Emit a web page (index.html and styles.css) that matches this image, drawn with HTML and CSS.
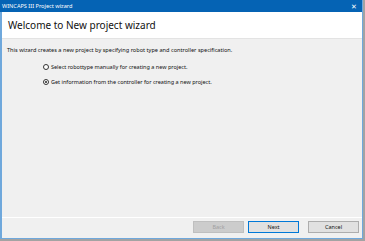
FILE: index.html
```html
<!DOCTYPE html>
<html lang="en">
<head>
  <meta charset="UTF-8" />
  <title>WINCAPS III Project wizard</title>
  <link rel="stylesheet" href="styles.css">
</head>
<body>
  <div class="window">
    <div class="titlebar">
      <span class="title">WINCAPS III Project wizard</span>
      <span class="close">&#x2715;</span>
    </div>
    <div class="header">
      <h1>Welcome to New project wizard</h1>
    </div>
    <div class="content">
      <p class="intro">This wizard creates a new project by specifying robot type and controller specification.</p>
      <div class="options">
        <label class="option">
          <span class="radio"></span>
          Select robottype manually for creating a new project.
        </label>
        <label class="option">
          <span class="radio checked"></span>
          Get information from the controller for creating a new project.
        </label>
      </div>
    </div>
    <div class="footer">
      <button class="btn disabled">Back</button>
      <button class="btn default">Next</button>
      <button class="btn cancel">Cancel</button>
    </div>
  </div>
</body>
</html>
```

FILE: styles.css
```css
* {
  margin: 0;
  padding: 0;
  box-sizing: border-box;
  font-family: "Noto Sans", "Open Sans", sans-serif;
}

body {
  background-color: #a3a3a3;
  width: 365px;
  height: 241px;
  overflow: hidden;
}

.window {
  width: 363px;
  height: 239px;
  display: flex;
  flex-direction: column;
  background-color: #f0f0f0;
  border-left: 2px solid #6fa8dc;
  border-right: 1px solid #6fa8dc;
  border-bottom: 1px solid #6fa8dc;
}

.titlebar {
  height: 12px;
  background-color: #0563b4;
  color: #fff;
  display: flex;
  align-items: center;
  justify-content: space-between;
  padding: 0 5px 0 0;
  margin-left: -2px;
}

.titlebar .title {
  font-size: 5.6px;
  padding-left: 2px;
}

.titlebar .close {
  font-size: 7px;
  line-height: 1;
}

.header {
  height: 27px;
  background-color: #fff;
  border-bottom: 1px solid #e3e3e3;
  display: flex;
  align-items: center;
  padding-left: 6px;
}

.header h1 {
  font-size: 10px;
  font-weight: normal;
  color: #111;
}

.content {
  flex: 1;
  padding: 7px 5px 0;
  color: #111;
}

.intro {
  font-size: 5.6px;
  line-height: 8px;
}

.options {
  display: flex;
  flex-direction: column;
  gap: 7px;
  padding: 9px 0 0 36px;
}

.option {
  display: flex;
  align-items: center;
  gap: 2px;
  font-size: 5.5px;
  line-height: 8px;
}

.radio {
  width: 6px;
  height: 6px;
  border: 1px solid #333;
  border-radius: 50%;
  background: #fff;
  display: flex;
  align-items: center;
  justify-content: center;
}

.radio.checked::after {
  content: "";
  width: 2px;
  height: 2px;
  border-radius: 50%;
  background: #222;
}

.footer {
  height: 21px;
  border-top: 1px solid #fff;
  display: flex;
  justify-content: flex-end;
  align-items: flex-start;
  padding: 3px 3px 0 0;
  gap: 4px;
}

.btn {
  width: 51px;
  height: 12px;
  font-size: 5.5px;
  background-color: #e1e1e1;
  border: 1px solid #adadad;
  color: #111;
}

.btn.disabled {
  background-color: #cccccc;
  border-color: #bfbfbf;
  color: #a0a0a0;
}

.btn.default {
  border-color: #0078d7;
}

.btn.cancel {
  margin-left: 5px;
}
```
